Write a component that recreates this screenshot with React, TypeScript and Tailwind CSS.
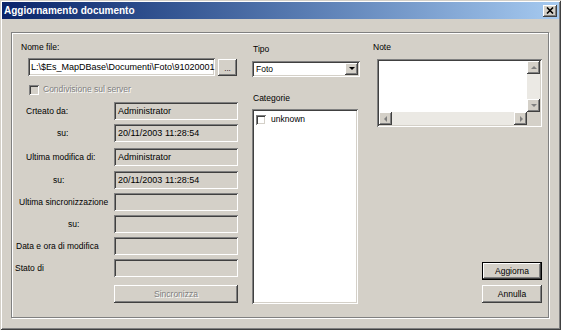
import React from "react";

const sunken =
  "shadow-[inset_1px_1px_0_#808080,inset_-1px_-1px_0_#ffffff,inset_2px_2px_0_#404040,inset_-2px_-2px_0_#d4d0c8]";
const raised =
  "shadow-[inset_-1px_-1px_0_#404040,inset_1px_1px_0_#ffffff,inset_-2px_-2px_0_#808080,inset_2px_2px_0_#d4d0c8]";
const disabledText = "text-[#808080] [text-shadow:1px_1px_0_#ffffff]";

function Field({ value }: { value?: string }) {
  return (
    <div className={`w-[124px] h-[18px] bg-[#d4d0c8] ${sunken} flex items-center pl-[4px] text-black text-[9px]`}>
      {value ?? ""}
    </div>
  );
}

function Row({ label, lpad, mt, value }: { label: string; lpad: string; mt: string; value?: string }) {
  return (
    <div className={`flex items-center h-[18px] ${mt}`}>
      <div className={`w-[102px] ${lpad} whitespace-nowrap`}>{label}</div>
      <Field value={value} />
    </div>
  );
}

function Arrow({ dir, color = "#808080" }: { dir: "up" | "down" | "left" | "right"; color?: string }) {
  const pts =
    dir === "up"
      ? "1,5 7,5 4,2"
      : dir === "down"
      ? "1,2 7,2 4,5"
      : dir === "left"
      ? "5,1 5,7 2,4"
      : "3,1 3,7 6,4";
  return (
    <svg width="8" height="8" viewBox="0 0 8 8">
      <polygon points={pts} fill={color} />
    </svg>
  );
}

export default function App() {
  return (
    <div
      className="w-[561px] h-[330px] bg-[#d4d0c8] p-[2px] flex flex-col overflow-hidden shadow-[inset_1px_1px_0_#d4d0c8,inset_-1px_-1px_0_#404040,inset_2px_2px_0_#ffffff,inset_-2px_-2px_0_#808080] text-[8.5px] leading-[11px] text-black"
      style={{ fontFamily: '"Liberation Sans", Arial, sans-serif' }}
    >
      {/* Title bar */}
      <div className="h-[17px] flex items-center justify-between bg-gradient-to-r from-[#0a246a] to-[#a6caf0] pl-[2px] pr-[2px]">
        <span className="text-white font-bold text-[10px]">Aggiornamento documento</span>
        <div className={`w-[14px] h-[12px] bg-[#d4d0c8] ${raised} flex items-center justify-center`}>
          <svg width="8" height="7" viewBox="0 0 8 7">
            <path d="M1 0.5 L7 6.5 M7 0.5 L1 6.5" stroke="#000" strokeWidth="1.6" />
          </svg>
        </div>
      </div>

      {/* Group frame */}
      <div className="mt-[13px] ml-[9px] w-[538px] h-[286px] border border-[#808080] shadow-[1px_1px_0_#ffffff,inset_1px_1px_0_#ffffff] flex">
        {/* Left column */}
        <div className="w-[229px] flex flex-col">
          <div className="mt-[9px] ml-[9px] h-[11px]">Nome file:</div>
          <div className="mt-[5px] ml-[16px] flex items-center h-[18px]">
            <div className={`w-[187px] h-[18px] bg-white ${sunken} flex items-center pl-[3px] whitespace-nowrap overflow-hidden text-[9px]`}>
              L:\$Es_MapDBase\Documenti\Foto\91020001
            </div>
            <div className={`ml-[3px] w-[19px] h-[17px] ${raised} flex items-end justify-center pb-[3px] text-[8px] leading-[8px]`}>
              ...
            </div>
          </div>
          <div className="mt-[8px] ml-[17px] h-[11px] flex items-center">
            <div className={`w-[10px] h-[10px] bg-[#d4d0c8] ${sunken}`} />
            <span className={`ml-[4px] ${disabledText}`}>Condivisione sul server</span>
          </div>
          <Row label="Crteato da:" lpad="pl-[14px]" mt="mt-[7px]" value="Administrator" />
          <Row label="su:" lpad="pl-[45px]" mt="mt-[4px]" value="20/11/2003 11:28:54" />
          <Row label="Ultima modifica di:" lpad="pl-[14px]" mt="mt-[6px]" value="Administrator" />
          <Row label="su:" lpad="pl-[41px]" mt="mt-[5px]" value="20/11/2003 11:28:54" />
          <Row label="Ultima sincronizzazione" lpad="pl-[7px]" mt="mt-[4px]" />
          <Row label="su:" lpad="pl-[56px]" mt="mt-[4px]" />
          <Row label="Data e ora di modifica" lpad="pl-[4px]" mt="mt-[4px]" />
          <Row label="Stato di" lpad="pl-[3px]" mt="mt-[4px]" />
          <div
            className={`mt-[8px] ml-[102px] w-[124px] h-[18px] ${raised} flex items-center justify-center ${disabledText}`}
          >
            Sincronizza
          </div>
        </div>

        {/* Middle column */}
        <div className="ml-[11px] w-[109px] flex flex-col">
          <div className="mt-[11px] ml-[1px] h-[11px]">Tipo</div>
          <div className={`mt-[6px] w-[108px] h-[16px] bg-white ${sunken} flex items-center p-[2px]`}>
            <span className="flex-1 pl-[2px]">Foto</span>
            <div className={`w-[13px] h-[12px] bg-[#d4d0c8] ${raised} flex items-center justify-center`}>
              <Arrow dir="down" color="#000" />
            </div>
          </div>
          <div className="mt-[16px] ml-[1px] h-[11px]">Categorie</div>
          <div className={`mt-[5px] w-[106px] h-[195px] bg-white ${sunken} p-[2px]`}>
            <div className="flex items-center mt-[3px] ml-[2px]">
              <div className={`w-[10px] h-[10px] bg-white ${sunken}`} />
              <span className="ml-[5px]">unknown</span>
            </div>
          </div>
        </div>

        {/* Right column */}
        <div className="ml-[11px] flex-1 flex flex-col">
          <div className="mt-[9px] ml-[1px] h-[11px]">Note</div>
          <div className={`mt-[6px] ml-[5px] w-[165px] h-[68px] bg-white ${sunken} p-[2px] flex flex-col`}>
            <div className="flex h-[51px]">
              <div className="flex-1 bg-white" />
              <div className="w-[13px] flex flex-col bg-[#ebe9e4]">
                <div className={`h-[13px] bg-[#d4d0c8] ${raised} flex items-center justify-center`}>
                  <Arrow dir="up" />
                </div>
                <div className="flex-1" />
                <div className={`h-[13px] bg-[#d4d0c8] ${raised} flex items-center justify-center`}>
                  <Arrow dir="down" />
                </div>
              </div>
            </div>
            <div className="flex h-[13px]">
              <div className="flex-1 flex bg-[#ebe9e4]">
                <div className={`w-[13px] bg-[#d4d0c8] ${raised} flex items-center justify-center`}>
                  <Arrow dir="left" />
                </div>
                <div className="flex-1" />
                <div className={`w-[13px] bg-[#d4d0c8] ${raised} flex items-center justify-center`}>
                  <Arrow dir="right" />
                </div>
              </div>
              <div className="w-[13px] bg-[#d4d0c8]" />
            </div>
          </div>
          <div className="mt-[135px] ml-[110px] w-[60px] h-[18px] border border-black flex">
            <div className={`flex-1 ${raised} flex items-center justify-center`}>Aggiorna</div>
          </div>
          <div className={`mt-[5px] ml-[110px] w-[60px] h-[18px] ${raised} flex items-center justify-center`}>
            Annulla
          </div>
        </div>
      </div>
    </div>
  );
}
